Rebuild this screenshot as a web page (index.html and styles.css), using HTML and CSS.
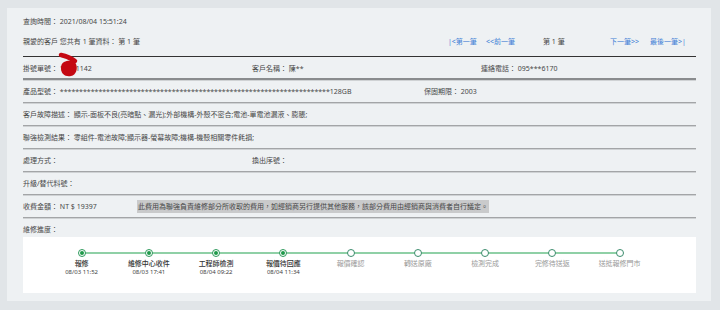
FILE: index.html
```html
<!doctype html>
<html>
    <head>
        <title>維修進度查詢</title>
        <link rel="stylesheet" href="styles.css">
    </head>
    <body>
        <div class="panel">
            <div class="meta">查詢時間： 2021/08/04 15:51:24</div>
            <div class="meta nav_row">
                <span class="count">親愛的客戶 您共有 1 筆資料： 第 1 筆</span>
                <div class="pager">
                    <a href="#">|&lt;第一筆</a>
                    <a href="#">&lt;&lt;前一筆</a>
                    <span>第 1 筆</span>
                    <a href="#">下一筆&gt;&gt;</a>
                    <a href="#">最後一筆&gt;|</a>
                </div>
            </div>

            <div class="row cols3 first">
                <div class="cell order">掛號單號： 10021142
                    <svg class="scribble" width="24" height="28" viewBox="0 0 24 28">
                        <path d="M5 4 C10 5 15 7 19 10" fill="none" stroke="#c40812" stroke-width="4.5" stroke-linecap="round"/>
                        <path d="M8 11 C12 9 18 9 20 13 C22 18 20 24 15 25 C9 26 5 23 5 17 C5 14 6 12 8 11 Z" fill="#c40812"/>
                    </svg>
                </div>
                <div class="cell">客戶名稱： 陳**</div>
                <div class="cell">連絡電話： 095***6170</div>
            </div>
            <div class="row cols_product">
                <div class="cell">產品型號： **********************************************************************128GB</div>
                <div class="cell">保固期限： 2003</div>
            </div>
            <div class="row">
                <div class="cell">客戶故障描述： 顯示-面板不良(亮暗點、漏光);外部機構-外殼不密合;電池-單電池漏液、膨脹;</div>
            </div>
            <div class="row">
                <div class="cell">聯強檢測結果： 零組件-電池故障;顯示器-螢幕故障;機構-機殼相關零件耗損;</div>
            </div>
            <div class="row cols2">
                <div class="cell">處理方式：</div>
                <div class="cell">換出序號：</div>
            </div>
            <div class="row">
                <div class="cell">升級/替代料號：</div>
            </div>
            <div class="row cols_fee">
                <div class="cell">收費金額： NT $ 19397</div>
                <div class="cell"><span class="note">此費用為聯強負責維修部分所收取的費用，如經銷商另行提供其他服務，該部分費用由經銷商與消費者自行議定。</span></div>
            </div>

            <div class="progress_label">維修進度：</div>
            <div class="progress">
                <div class="step done"><span class="dot"></span><span class="name">報修</span><span class="time">08/03 11:52</span></div>
                <div class="step done"><span class="dot"></span><span class="name">維修中心收件</span><span class="time">08/03 17:41</span></div>
                <div class="step done"><span class="dot"></span><span class="name">工程師檢測</span><span class="time">08/04 09:22</span></div>
                <div class="step done"><span class="dot"></span><span class="name">報價待回應</span><span class="time">08/04 11:34</span></div>
                <div class="step"><span class="dot"></span><span class="name">報價確認</span></div>
                <div class="step"><span class="dot"></span><span class="name">轉送原廠</span></div>
                <div class="step"><span class="dot"></span><span class="name">檢測完成</span></div>
                <div class="step"><span class="dot"></span><span class="name">完修待送返</span></div>
                <div class="step"><span class="dot"></span><span class="name">送抵報修門市</span></div>
            </div>
        </div>
    </body>
</html>
```

FILE: styles.css
```css
body {
    margin: 0;
    padding: 8px 0 8px 7px;
    background-color: #e1e5e8;
    font-family: "Noto Sans", "Noto Sans CJK TC", sans-serif;
    font-size: 7px;
    color: #474747;
}
.panel {
    width: 673px;
    padding: 0 15px 8px 16px;
    background-color: #eef1f3;
}
.meta {
    height: 26px;
    line-height: 28px;
}
.nav_row {
    display: flex;
    height: 22px;
    line-height: 16px;
    border-bottom: 1px solid #333;
}
.count {
    width: 425px;
}
.pager {
    display: grid;
    grid-template-columns: 38px 57px 67px 40px auto;
}
.pager a {
    color: #3f7fd6;
    text-decoration: none;
}
.row {
    display: flex;
    align-items: center;
    height: 22px;
    border-bottom: 1px solid #a3a5a7;
    box-shadow: 0 1px 0 #cfd2d4;
}
.row.first {
    border-bottom: 2px solid #8a8c8e;
    height: 21px;
}
.cols3 .cell:nth-child(1),
.cols3 .cell:nth-child(2),
.cols2 .cell:nth-child(1) {
    width: 229px;
}
.cols_product .cell:nth-child(1) {
    width: 401px;
}
.cols_fee .cell:nth-child(1) {
    width: 114px;
}
.order {
    position: relative;
}
.scribble {
    position: absolute;
    left: 33px;
    top: -12px;
}
.note {
    background-color: #c9cacb;
    padding: 2px 1px;
}
.progress_label {
    height: 19px;
    padding-top: 5px;
    line-height: 14px;
    box-sizing: border-box;
}
.progress {
    display: flex;
    height: 56px;
    padding-left: 25px;
    background-color: #fff;
    box-sizing: border-box;
}
.step {
    position: relative;
    width: 67.25px;
    display: flex;
    flex-direction: column;
    align-items: center;
    padding-top: 12px;
}
.step::after {
    content: "";
    position: absolute;
    top: 15px;
    left: 50%;
    width: 100%;
    height: 2px;
    background-color: #8fd0a6;
}
.step:last-child::after {
    display: none;
}
.dot {
    position: relative;
    z-index: 1;
    width: 8px;
    height: 8px;
    box-sizing: border-box;
    border: 1px solid #3b8c6c;
    border-radius: 50%;
    background-color: #fff;
}
.done .dot {
    border-color: #2e9a5c;
}
.done .dot::after {
    content: "";
    position: absolute;
    left: 1px;
    top: 1px;
    width: 4px;
    height: 4px;
    border-radius: 50%;
    background-color: #1f9a4a;
}
.name {
    margin-top: 2px;
    line-height: 9px;
    color: #9a9a9a;
}
.done .name {
    color: #333;
    font-weight: 500;
}
.time {
    line-height: 9px;
    font-size: 6px;
    color: #444;
}
```
